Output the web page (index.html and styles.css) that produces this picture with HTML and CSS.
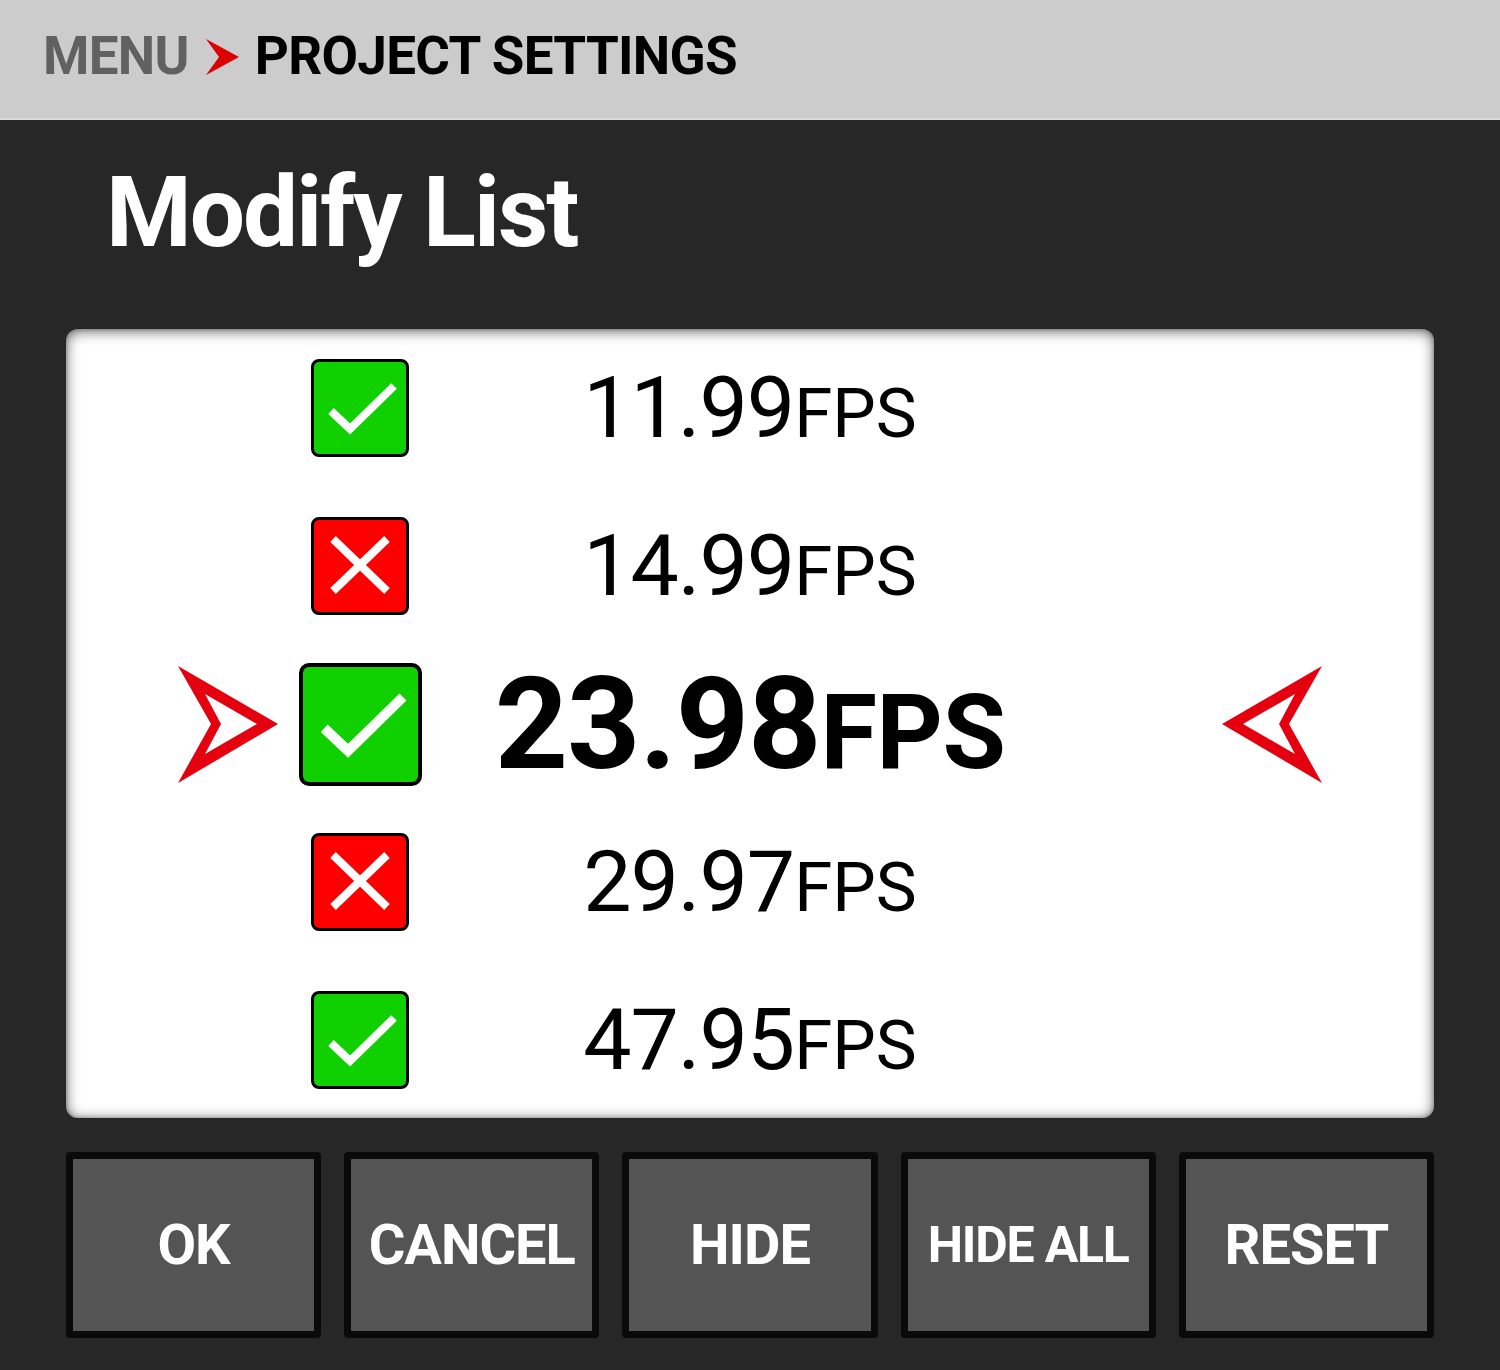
FILE: index.html
```html
<!DOCTYPE html>
<html lang="en">
<head>
<meta charset="utf-8">
<title>Modify List</title>
<link rel="stylesheet" href="styles.css">
</head>
<body>
<header class="topbar">
  <span class="crumb-root">MENU</span>
  <svg class="crumb-sep" width="33" height="36" viewBox="0 0 33 36"><path d="M0 0 L33 18 L0 36 L13 18 Z" fill="#dd0000"/></svg>
  <span class="crumb-current">PROJECT SETTINGS</span>
</header>
<main class="content">
  <h1 class="title">Modify List</h1>
  <section class="panel">
    <div class="row">
      <div class="cb-cell"><div class="cb ok"><svg viewBox="0 0 92 92"><path d="M17 49 L36 67 L80 24" /></svg></div></div>
      <div class="val">11.99<span class="unit">FPS</span></div>
    </div>
    <div class="row">
      <div class="cb-cell"><div class="cb no"><svg viewBox="0 0 92 92"><path d="M19 19 L73 71 M73 19 L19 71" /></svg></div></div>
      <div class="val">14.99<span class="unit">FPS</span></div>
    </div>
    <div class="row selected">
      <svg class="ptr ptr-l" width="100" height="117" viewBox="0 0 100 117"><path fill-rule="evenodd" d="M0 0 L100 58 L0 117 L33 58 Z M27 28 L79 58 L27 88 L43 58 Z"/></svg>
      <div class="cb-cell"><div class="cb ok big"><svg viewBox="0 0 92 92"><path d="M17 49 L36 67 L80 24" /></svg></div></div>
      <div class="val">23.98<span class="unit">FPS</span></div>
      <svg class="ptr ptr-r" width="100" height="117" viewBox="0 0 100 117"><path fill-rule="evenodd" d="M100 0 L0 58 L100 117 L67 58 Z M73 28 L21 58 L73 88 L57 58 Z"/></svg>
    </div>
    <div class="row">
      <div class="cb-cell"><div class="cb no"><svg viewBox="0 0 92 92"><path d="M19 19 L73 71 M73 19 L19 71" /></svg></div></div>
      <div class="val">29.97<span class="unit">FPS</span></div>
    </div>
    <div class="row">
      <div class="cb-cell"><div class="cb ok"><svg viewBox="0 0 92 92"><path d="M17 49 L36 67 L80 24" /></svg></div></div>
      <div class="val">47.95<span class="unit">FPS</span></div>
    </div>
  </section>
  <nav class="actions">
    <button class="btn">OK</button>
    <button class="btn">CANCEL</button>
    <button class="btn">HIDE</button>
    <button class="btn btn-small">HIDE ALL</button>
    <button class="btn">RESET</button>
  </nav>
</main>
</body>
</html>
```
FILE: styles.css
```css
* { box-sizing: border-box; }
html, body { margin: 0; padding: 0; }
body {
  width: 1500px;
  height: 1370px;
  background: #272727;
  font-family: Roboto, "Liberation Sans", sans-serif;
  overflow: hidden;
}
.topbar {
  height: 120px;
  background: #cccccc;
  border-bottom: 2px solid #dadada;
  display: flex;
  align-items: center;
  padding: 0 0 5px 43px;
  font-weight: 700;
  font-size: 53px;
  line-height: 1;
  letter-spacing: -0.7px;
}
.crumb-root { color: #616161; }
.crumb-sep { margin: 0 16px 0 17px; }
.crumb-current { color: #000; }
.content {
  padding: 0 66px;
}
.title {
  margin: 44px 0 0 40px;
  color: #fff;
  font-size: 98px;
  line-height: 98px;
  font-weight: 700;
  letter-spacing: -2px;
  height: 98px;
}
.panel {
  margin-top: 67px;
  height: 789px;
  background: #ffffff;
  border-radius: 12px;
  box-shadow: inset 0 2px 14px rgba(0,0,0,0.6), inset 0 0 4px rgba(0,0,0,0.3);
  overflow: hidden;
}
.row {
  height: 158px;
  display: grid;
  grid-template-columns: 112px 100px 164px 1fr 164px 100px 112px;
  align-items: center;
}
.cb-cell {
  grid-column: 3;
  grid-row: 1;
  display: flex;
  justify-content: center;
}
.cb {
  width: 98px;
  height: 98px;
  border: 3px solid #000;
  border-radius: 8px;
}
.cb.big {
  width: 123px;
  height: 123px;
  border-width: 4px;
  border-radius: 10px;
}
.cb svg { display: block; width: 100%; height: 100%; }
.cb path { fill: none; stroke: #fff; stroke-width: 8; }
.cb.ok { background: #10d000; }
.cb.no { background: #ff0000; }
.val {
  grid-column: 4;
  grid-row: 1;
  text-align: center;
  white-space: nowrap;
  font-size: 86px;
  line-height: 86px;
  color: #000;
  letter-spacing: -1px;
}
.unit {
  font-size: 69px;
  line-height: 0;
  letter-spacing: 0;
}
.selected .val {
  font-weight: 700;
  font-size: 128px;
  line-height: 128px;
  letter-spacing: -1px;
}
.selected .unit {
  font-size: 103px;
  letter-spacing: -0.5px;
}
.ptr { fill: #e5000f; grid-row: 1; display: block; }
.ptr-l { grid-column: 2; }
.ptr-r { grid-column: 6; }
.actions {
  margin-top: 34px;
  display: grid;
  grid-template-columns: repeat(5, 1fr);
  gap: 23px;
}
.btn {
  height: 186px;
  background: #545454;
  border: 7px solid #0a0a0a;
  border-radius: 4px;
  color: #fff;
  font-family: Roboto, "Liberation Sans", sans-serif;
  font-weight: 700;
  font-size: 56px;
  letter-spacing: -1px;
  padding: 0;
  display: flex;
  align-items: center;
  justify-content: center;
}
.btn-small {
  font-size: 50px;
  letter-spacing: -1.2px;
}
```
